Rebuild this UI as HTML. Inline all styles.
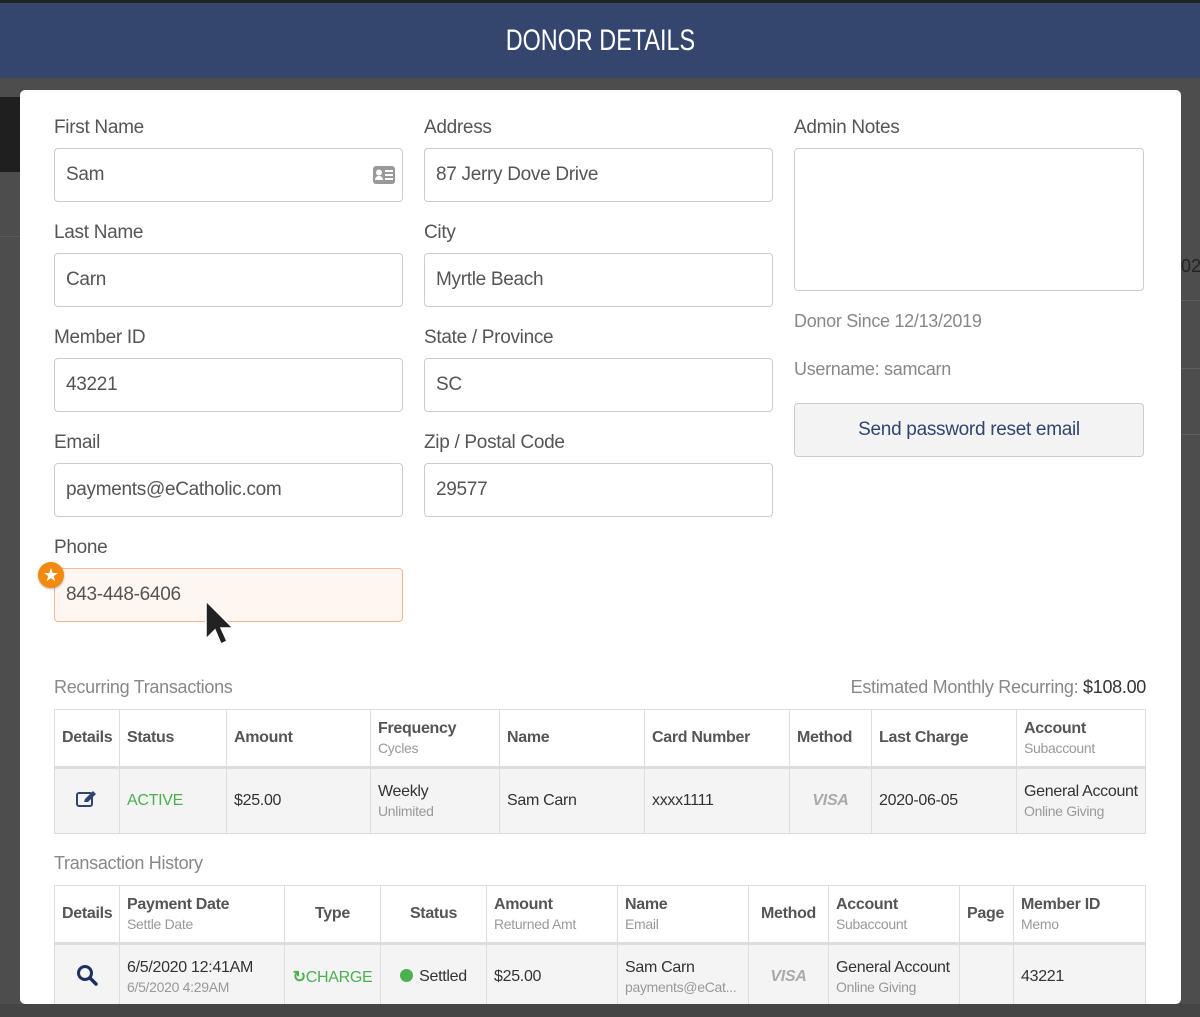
<!DOCTYPE html>
<html><head><meta charset="utf-8"><style>
*{box-sizing:border-box;margin:0;padding:0}
body{width:1200px;height:1017px;overflow:hidden;background:#4d4d4d;position:relative;font-family:"Liberation Sans Narrow","Liberation Sans",sans-serif;color:#333}
.a{position:absolute}
.hdr{left:0;top:0;width:1200px;height:78px;background:#34466e;border-top:3px solid #222;color:#fff;font-size:30px;text-align:center;line-height:76px}
.hdr span{display:inline-block;transform:scaleX(0.78)}
.modal{left:20px;top:90px;width:1161px;height:914px;background:#fff;border-radius:5px}
.lbl{font-size:19px;color:#555;letter-spacing:-0.3px}
.inp{height:54px;border:1px solid #ccc;border-radius:4px;font-size:19px;color:#555;padding-left:11px;line-height:52px;background:#fff;letter-spacing:-0.3px}
.gray{color:#888;font-size:18px;letter-spacing:-0.3px}
table{position:absolute;border-collapse:collapse;font-size:16px;table-layout:fixed;letter-spacing:-0.3px}
td{border:1px solid #ddd;padding:0 7px;vertical-align:middle;white-space:nowrap;overflow:hidden}
th{border:1px solid #ddd;border-bottom:3px solid #ddd;padding:0 7px;text-align:left;font-weight:bold;color:#555;font-size:16px;vertical-align:middle;white-space:nowrap;overflow:hidden}
th small,td small{display:block;font-weight:normal;color:#999;font-size:14px;margin-top:2px}
tbody tr{background:#f4f4f4}
.visa{font-family:"Liberation Sans",sans-serif;font-style:italic;font-weight:bold;color:#aaa;font-size:16px;text-align:center}
</style></head><body>
<div class="a" style="left:0;top:97px;width:20px;height:75px;background:#1f1f1f"></div>
<div class="a" style="left:0;top:236px;width:20px;height:1px;background:#5a5a5a"></div>
<div class="a" style="left:1181px;top:300px;width:19px;height:1px;background:#5f5f5f"></div>
<div class="a" style="left:1181px;top:368px;width:19px;height:1px;background:#5f5f5f"></div>
<div class="a" style="left:1181px;top:434px;width:19px;height:1px;background:#5f5f5f"></div>
<div class="a" style="left:1181px;top:256px;color:#222;font-size:18px">020</div>
<div class="a hdr"><span>DONOR DETAILS</span></div>
<div class="a modal"></div>

<div class="a lbl" style="left:54px;top:117px">First Name</div>
<div class="a inp" style="left:54px;top:148px;width:349px">Sam
<svg class="a" style="left:318px;top:17px" width="22" height="18" viewBox="0 0 22 18"><rect x="0" y="0" width="22" height="18" rx="3" fill="#999"/><circle cx="6" cy="6.5" r="3" fill="#fff"/><path d="M2 14c0-3 2-4 4-4s4 1 4 4z" fill="#fff"/><rect x="12" y="4" width="8" height="2" fill="#fff"/><rect x="12" y="8" width="8" height="2" fill="#fff"/><rect x="12" y="12" width="8" height="2" fill="#fff"/></svg></div>
<div class="a lbl" style="left:54px;top:222px">Last Name</div>
<div class="a inp" style="left:54px;top:253px;width:349px">Carn</div>
<div class="a lbl" style="left:54px;top:327px">Member ID</div>
<div class="a inp" style="left:54px;top:358px;width:349px">43221</div>
<div class="a lbl" style="left:54px;top:432px">Email</div>
<div class="a inp" style="left:54px;top:463px;width:349px">payments@eCatholic.com</div>
<div class="a lbl" style="left:54px;top:537px">Phone</div>
<div class="a inp" style="left:54px;top:568px;width:349px;background:#fdf6f1;border-color:#f5b98d">843-448-6406</div>
<div class="a" style="left:38px;top:562px;width:26px;height:26px;border-radius:50%;background:#f28a0f;color:#fff;font-size:18px;line-height:26px;text-align:center;box-shadow:0 1px 2px rgba(0,0,0,.3)">★</div>
<svg class="a" style="left:204px;top:599px" width="30" height="48" viewBox="0 0 30 48"><path d="M2 2v38l9-9 6 14 6-3-6-13h12z" fill="#222" stroke="#fff" stroke-width="1.5"/></svg>

<div class="a lbl" style="left:424px;top:117px">Address</div>
<div class="a inp" style="left:424px;top:148px;width:349px">87 Jerry Dove Drive</div>
<div class="a lbl" style="left:424px;top:222px">City</div>
<div class="a inp" style="left:424px;top:253px;width:349px">Myrtle Beach</div>
<div class="a lbl" style="left:424px;top:327px">State / Province</div>
<div class="a inp" style="left:424px;top:358px;width:349px">SC</div>
<div class="a lbl" style="left:424px;top:432px">Zip / Postal Code</div>
<div class="a inp" style="left:424px;top:463px;width:349px">29577</div>

<div class="a lbl" style="left:794px;top:117px">Admin Notes</div>
<div class="a inp" style="left:794px;top:148px;width:350px;height:143px"></div>
<div class="a gray" style="left:794px;top:311px">Donor Since 12/13/2019</div>
<div class="a gray" style="left:794px;top:359px">Username: samcarn</div>
<div class="a" style="left:794px;top:403px;width:350px;height:54px;border:1px solid #ccc;border-radius:4px;background:#f3f3f3;color:#2f4570;font-size:19px;text-align:center;line-height:52px;letter-spacing:-0.3px">Send password reset email</div>

<div class="a gray" style="left:54px;top:677px">Recurring Transactions</div>
<div class="a gray" style="right:54px;top:677px">Estimated Monthly Recurring: <span style="color:#333">$108.00</span></div>
<table style="left:54px;top:709px;width:1092px">
<colgroup><col style="width:65px"><col style="width:107px"><col style="width:144px"><col style="width:129px"><col style="width:145px"><col style="width:145px"><col style="width:82px"><col style="width:145px"><col></colgroup>
<thead><tr style="height:58px"><th>Details</th><th>Status</th><th>Amount</th><th>Frequency<small>Cycles</small></th><th>Name</th><th>Card Number</th><th>Method</th><th>Last Charge</th><th>Account<small>Subaccount</small></th></tr></thead>
<tbody><tr style="height:66px"><td style="text-align:center"><svg width="22" height="18" viewBox="0 0 22 18"><rect x="1" y="3" width="15" height="13" rx="2" fill="none" stroke="#2f4570" stroke-width="2"/><path d="M8 12l1-3 8-8 3 3-8 8z" fill="#2f4570"/></svg></td><td style="color:#4caf50">ACTIVE</td><td>$25.00</td><td>Weekly<small>Unlimited</small></td><td>Sam Carn</td><td>xxxx1111</td><td class="visa">VISA</td><td>2020-06-05</td><td>General Account<small>Online Giving</small></td></tr></tbody>
</table>

<div class="a gray" style="left:54px;top:853px">Transaction History</div>
<table style="left:54px;top:885px;width:1092px">
<colgroup><col style="width:65px"><col style="width:165px"><col style="width:96px"><col style="width:106px"><col style="width:131px"><col style="width:131px"><col style="width:80px"><col style="width:131px"><col style="width:54px"><col></colgroup>
<thead><tr style="height:58px"><th>Details</th><th>Payment Date<small>Settle Date</small></th><th style="text-align:center">Type</th><th style="text-align:center">Status</th><th>Amount<small>Returned Amt</small></th><th>Name<small>Email</small></th><th style="text-align:center">Method</th><th>Account<small>Subaccount</small></th><th>Page</th><th>Member ID<small>Memo</small></th></tr></thead>
<tbody><tr style="height:66px"><td style="text-align:center"><svg width="22" height="22" viewBox="0 0 22 22"><circle cx="9" cy="9" r="6.5" fill="none" stroke="#1c3160" stroke-width="3"/><path d="M14 14l6 6" stroke="#1c3160" stroke-width="3.5" stroke-linecap="round"/></svg></td><td>6/5/2020 12:41AM<small>6/5/2020 4:29AM</small></td><td style="color:#4caf50;text-align:center;padding:0 2px"><b>↻</b>CHARGE</td><td style="text-align:center"><span style="display:inline-block;width:13px;height:13px;border-radius:50%;background:#4caf50;vertical-align:-1px;margin-right:6px"></span>Settled</td><td>$25.00</td><td>Sam Carn<small>payments@eCat...</small></td><td class="visa">VISA</td><td>General Account<small>Online Giving</small></td><td></td><td>43221</td></tr></tbody>
</table>
<div class="a" style="left:0;top:1004px;width:1200px;height:13px;background:#454545"></div>
</body></html>
